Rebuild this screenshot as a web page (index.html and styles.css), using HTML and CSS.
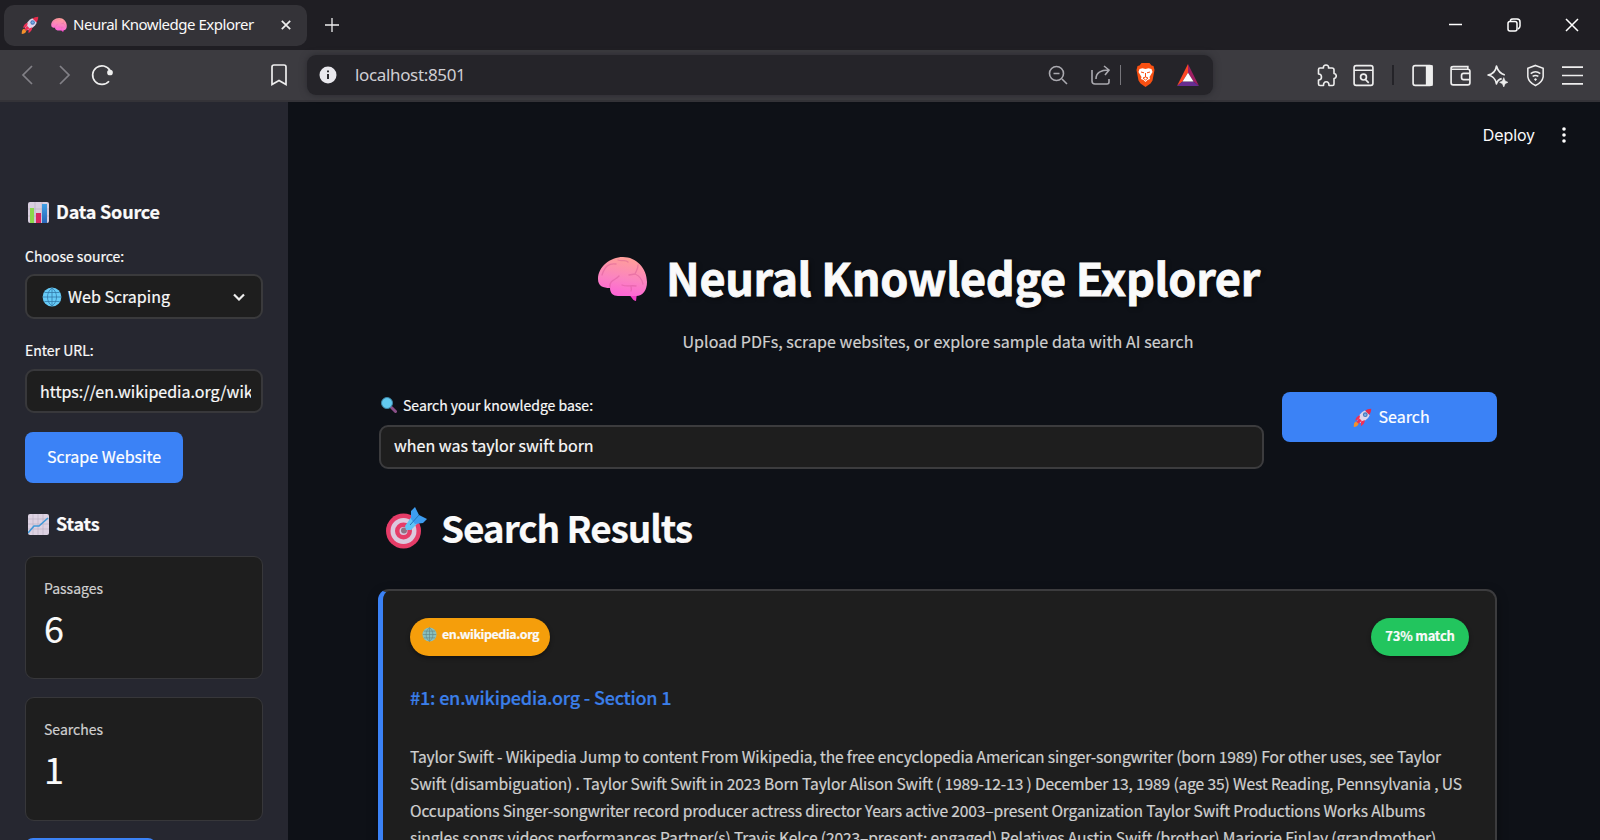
FILE: index.html
```html
<!DOCTYPE html>
<html lang="en"><head><meta charset="utf-8"><title>Neural Knowledge Explorer</title><link rel="stylesheet" href="styles.css"></head>
<body>
<svg class="defs" width="0" height="0" aria-hidden="true">
<defs>
<linearGradient id="pink" x1=".3" y1="0" x2=".1" y2="1"><stop offset="0" stop-color="#ff9d9b"/><stop offset=".5" stop-color="#fb84c0"/><stop offset="1" stop-color="#ff5fda"/></linearGradient>
<linearGradient id="blue" x1="0" y1="0" x2="0" y2="1"><stop offset="0" stop-color="#3fa0e6"/><stop offset="1" stop-color="#2a66b8"/></linearGradient>
<symbol id="brain" viewBox="0 0 49 44"><path fill="#f03fc4" d="M31 36h8l-1 8c-3 0-4-4-7-6Z"/><path fill="url(#pink)" d="M25 0C38 0 49 11 49 25c0 8-4 14-11 14H20c-5 0-8-3-8-8C5 31 0 29 0 22 0 10 12 0 25 0Z"/><path fill="none" stroke="#cf4f90" stroke-opacity=".4" stroke-width="1.300" stroke-linecap="round" d="M4 18C7 9 11 6 18 7M12 30c-1-7 6-7 9-11M20 3c4 2 7-1 10 2M40 8c0 5-2 6-3 9M37 17c5 2 7 5 8 10M37 17l-6 1M24 28c5 2 8 0 14 1M33 29c0 2 1 3 0 5"/></symbol>
<symbol id="rocket" viewBox="0 0 24 24"><path fill="#e52a4b" d="M23 1c-3 0-6 1-8 3l5 5c2-2 3-5 3-8Z"/><path fill="#dfd5ea" d="M15 3c-5 2-8 7-10 12l4 4c5-2 10-5 12-10Z"/><path fill="#ee3157" d="M9 9c-4 1-6 4-6 7l5-2ZM15 15c0 4-2 6-5 8l0-6ZM8 13l3 3-4 4-3-2Z"/><path fill="#f4912b" d="M4 17l3 3c-1 3-3 4-6 4 0-3 0-6 3-7Z"/><circle cx="15.5" cy="8.5" r="3" fill="#4376b8"/><circle cx="15.5" cy="8.5" r="1.6" fill="#79b0e8"/></symbol>
<symbol id="bars" viewBox="0 0 21 21"><rect width="21" height="21" rx="2" fill="#d9cfdf"/><path stroke="#b7adbf" stroke-width=".6" d="M0 7h21M0 14h21M7 0v21M14 0v21"/><path fill="#8bd84c" d="M2 6h4v15H2z"/><path fill="#d92863" d="M8 11h5v10H8z"/><path fill="url(#blue)" d="M14 2h5v19h-5z"/></symbol>
<symbol id="chart" viewBox="0 0 21 21"><rect width="21" height="21" rx="2" fill="#ddd2e2"/><path stroke="#bbaec4" stroke-width=".6" d="M0 5h21M0 10h21M0 15h21M5 0v21M10 0v21M15 0v21"/><path fill="none" stroke="#3f98d8" stroke-width="1.6" d="M0 19 6 12h5L20 4"/></symbol>
<symbol id="globe" viewBox="0 0 20 20"><circle cx="10" cy="10" r="9.4" fill="#66cbf7"/><path fill="none" stroke="#327aa9" stroke-width=".8" d="M10 1v18M1 10h18M2.400 5.500h15.200M2.400 14.500h15.200M10 1C4 5 4 15 10 19M10 1c6 4 6 14 0 18"/></symbol>
<symbol id="lens" viewBox="0 0 16 16"><path stroke="#8a4f88" stroke-width="3" stroke-linecap="round" d="m10.500 10.500 4 4"/><circle cx="6" cy="6" r="5.500" fill="#62caf0" stroke="#3d86a6"/></symbol>
<symbol id="target" viewBox="0 0 41 42"><circle cx="17.500" cy="24" r="17.500" fill="#e63c68"/><circle cx="17.500" cy="24" r="13" fill="#dcc9de"/><circle cx="17.500" cy="24" r="8.500" fill="#e63c68"/><circle cx="17.500" cy="24" r="4" fill="#d8c8de"/><circle cx="18" cy="23.500" r="3" fill="#8d7485"/><path fill="#5fc4f5" d="m19 19 7-10 7 6-8 8-5 0Z"/><path fill="#3d9df0" d="m25 12 0-8 4-4 4 8 8 4-4 4-8 1Z"/><path stroke="#2375b9" stroke-width="1" d="m24 18 9-10"/></symbol>
</defs></svg>
<header class="tabs">
  <div class="tab"><svg class="e18"><use href="#rocket"/></svg><svg class="tab-brain"><use href="#brain"/></svg><span>Neural Knowledge Explorer</span><svg class="close" viewBox="0 0 10 10"><path d="m.8.8 8.400 8.400M9.200.8.8 9.200"/></svg></div>
  <svg class="plus" viewBox="0 0 14 14"><path d="M7 0v14M0 7h14"/></svg>
  <div class="win"><svg viewBox="0 0 14 14"><path d="M0 6.500h13"/></svg><svg viewBox="0 0 14 14"><rect x="1" y="3.500" width="9" height="9.500" rx="2"/><path d="M3.500 3.500V2Q4 1 6 1h4q3 0 3 3v4q0 2-2 3"/></svg><svg viewBox="0 0 14 14"><path d="m1 1 12 12M13 1 1 13"/></svg></div>
</header>
<nav class="toolbar">
  <div class="history"><svg class="dim" viewBox="0 0 12 20"><path d="M11 1 2 10l9 9"/></svg><svg class="dim" viewBox="0 0 12 20"><path d="m1 1 9 9-9 9"/></svg><svg class="reload" viewBox="0 0 22 22"><path d="M18 17.200A9.300 9.300 0 1 1 19 6.500"/><circle class="solid" cx="19" cy="8.500" r="2"/></svg><svg class="bookmark" viewBox="0 0 16 22"><path d="M1 3q0-2 2-2h10q2 0 2 2v17.500l-7-4-7 4Z"/></svg></div>
  <div class="address"><svg class="info" viewBox="0 0 18 18"><circle cx="9" cy="9" r="8.500"/><path d="M9 8v5M9 4.500v1.800"/></svg><span>localhost:8501</span>
    <div class="address-icons"><svg class="soft" viewBox="0 0 20 20"><circle cx="8.500" cy="8.500" r="7"/><path d="M5.500 8.500h6M14 14l5 5"/></svg><svg class="soft" viewBox="0 0 20 20"><path d="M1 5v11q0 3 3 3h12q2 0 2-2v-3M5 14c0-6 4-9 13-9M13 1l5 4-4 5"/></svg><i></i><svg class="lion" viewBox="0 0 18 24"><path fill="#f85012" d="M5 0h8l2 2.500 2 .5 1 4-2 10.500-2 3-5 3.500-5-3.500-2-3L0 7l1-4 2-.5Z"/><path fill="#fff" d="m3 6 3-.8 3 .8 3-.8 3 .8 1 3-3 5 .5 2-2.500 1-2 2-2-2-2.500-1L5 14 2 9Z"/><path d="m4.500 9 3 .8M13.500 9l-3 .8M9 10v4l-2.500 1L9 17l2.500-2L9 14" fill="none" stroke="#f85012"/></svg><svg class="bat" viewBox="0 0 20 20"><path fill="#ff4724" d="M10 0 0 20l5-4 5-8Z"/><path fill="#9e1f63" d="m10 0 10 20-5-4-5-8Z"/><path fill="#662d91" d="M0 20h20l-5-4H5Z"/><path fill="#fff" d="m10 8-5 8h10Z"/></svg></div>
  </div>
  <div class="extensions">
    <svg viewBox="0 0 21 23"><path stroke-linejoin="round" d="M2.500 5.500q0-1.500 1.500-1.500h3.500c-1-4 6-4 5 0H16q2 0 2 2v3.500c3 .5 3 4.500 0 5V20q0 1.500-1.500 1.500H13c0-5-5.500-5-5.500 0H4q-1.500 0-1.500-1.500v-4c4 0 4-6 0-6Z"/></svg>
    <svg viewBox="0 0 20 22"><rect x="1" y="1.500" width="18" height="19" rx="2"/><path d="M1 6h18M12 15l3 3"/><circle cx="10" cy="12.500" r="2.800"/></svg><i></i>
    <svg viewBox="0 0 20 22"><rect x="1" y="1.500" width="18" height="19" rx="2"/><path class="solid" d="M14 2h5v18h-5Z"/></svg>
    <svg viewBox="0 0 20 22"><path d="M17 5V2.500H3Q1 2.500 1 4v14q0 2 2 2h14q2 0 2-2V7q0-2-2-2H1M19 9h-6q-2 0-2 2v2q0 2 2 2h6"/></svg>
    <svg viewBox="0 0 20 22"><path stroke-linejoin="round" d="M14 14q-4 1-5 5-1-7-8-8.500Q8 9 9 2q2 7 8 8.500"/><path class="solid" stroke-width=".5" d="m16 13 1.300 3.200L20 17.500l-2.700 1.300L16 22l-1.300-3.200-2.700-1.300 2.700-1.300Z"/></svg>
    <svg viewBox="0 0 20 24"><path d="m10 1.500 8 3v9q-1 6-8 9-7-3-8-9v-9ZM5 10q5-4 10 0M7 13q3-2 6 0M9 15.500l1 1 1-1"/></svg>
    <svg viewBox="0 0 20 20"><path d="M0 2h20M0 10h20M0 18h20"/></svg>
  </div>
</nav>
<div class="app">
<aside class="sidebar">
  <h3><svg><use href="#bars"/></svg><span>Data Source</span></h3>
  <label class="l-source"><span>Choose source:</span></label>
  <div class="select"><svg class="globe"><use href="#globe"/></svg><span>Web Scraping</span><svg class="chev" viewBox="0 0 12 8"><path d="m1 1.500 5 5 5-5"/></svg></div>
  <label class="l-url"><span>Enter URL:</span></label>
  <div class="url"><div><span>https://en.wikipedia.org/wiki</span></div></div>
  <button class="scrape"><span>Scrape Website</span></button>
  <h3 class="stats"><svg><use href="#chart"/></svg><span>Stats</span></h3>
  <div class="metric"><small>Passages</small><b>6</b></div>
  <div class="metric second"><small>Searches</small><b>1</b></div>
  <button class="more"></button>
</aside>
<main>
  <div class="deploy"><span>Deploy</span><svg viewBox="0 0 4 16"><circle cx="2" cy="2" r="1.800"/><circle cx="2" cy="8" r="1.800"/><circle cx="2" cy="14" r="1.800"/></svg></div>
  <h1><svg><use href="#brain"/></svg><span>Neural Knowledge Explorer</span></h1>
  <p class="sub"><span>Upload PDFs, scrape websites, or explore sample data with AI search</span></p>
  <section class="search"><div><label><svg><use href="#lens"/></svg><span>Search your knowledge base:</span></label><div class="query"><span>when was taylor swift born</span></div></div><button><svg><use href="#rocket"/></svg><span>Search</span></button></section>
  <h2><svg><use href="#target"/></svg><span>Search Results</span></h2>
  <article><div class="badges"><div class="source"><svg><use href="#globe"/></svg><span>en.wikipedia.org</span></div><div class="match"><span>73% match</span></div></div>
  <h4><span>#1: en.wikipedia.org - Section 1</span></h4>
  <div class="passage"><span>Taylor Swift - Wikipedia Jump to content From Wikipedia, the free encyclopedia American singer-songwriter (born 1989) For other uses, see Taylor</span><span>Swift (disambiguation) . Taylor Swift Swift in 2023 Born Taylor Alison Swift ( 1989-12-13 ) December 13, 1989 (age 35) West Reading, Pennsylvania , US</span><span>Occupations Singer-songwriter record producer actress director Years active 2003–present Organization Taylor Swift Productions Works Albums</span><span>singles songs videos performances Partner(s) Travis Kelce (2023–present; engaged) Relatives Austin Swift (brother) Marjorie Finlay (grandmother)</span></div></article>
</main></div>
</body></html>
```
FILE: styles.css
```css
*{box-sizing:border-box}
body{margin:0;width:1600px;height:840px;overflow:hidden;background:#0e1117;color:#fafafa;font-family:"Noto Sans CJK SC","Noto Sans",sans-serif;font-size:16px;display:flex;flex-direction:column}
.defs{position:absolute}
svg{display:block;flex:none}
span,small,b{white-space:nowrap}
button{border:0;font:inherit;color:#fff;background:#3b82f6}
h1,h2,h3,h4,p{margin:0}
.tabs{height:50px;flex:none;background:#1f1e23;display:flex;align-items:center;padding-left:4px}
.tab{width:303px;height:41px;background:#343338;border-radius:10px;display:flex;align-items:center;padding:0 16px 0 17px;font:15px "Noto Sans",sans-serif}
.e18{width:18px;height:18px}
.tab-brain{width:16px;height:14px;margin:0 6px 0 12px}
.tab span{letter-spacing:-.47px;margin-top:-2px}
.close{width:10px;height:10px;margin-left:auto}
.close,.plus,.win svg,.history svg,.address-icons .soft,.extensions svg,.chev{fill:none;stroke:#eee;stroke-width:1.700}
.plus{width:14px;height:14px;margin-left:18px;stroke-width:1.300}
.win{margin-left:auto;display:flex;gap:44px;padding-right:21px}
.win svg{width:14px;height:14px;stroke:#fff;stroke-width:1.500}
.toolbar{height:52px;flex:none;background:#3c3b40;border-bottom:2px solid #343338;display:flex;align-items:center}
.history{width:307px;display:flex;align-items:center;padding-left:21px}
.history svg.dim{width:12px;height:20px;stroke:#828187;margin-right:26px}
.history .reload{width:22px;height:22px;margin-left:-6px}
.history svg .solid,.extensions svg .solid{fill:#eee}
.history .bookmark{width:16px;height:22px;margin-left:158px}
.address{width:906px;height:40px;background:#252429;border-radius:9px;box-shadow:0 0 7px #2b2a2f;display:flex;align-items:center;padding:0 14px 0 12px;font:17px "Noto Sans",sans-serif;color:#cfced3}
.address span{letter-spacing:-.35px;margin-top:-1px}
.info{width:18px;height:18px;fill:#e9e8ed;margin-right:18px}
.info path{stroke:#29282d;stroke-width:2}
.address-icons{margin-left:auto;display:flex;align-items:center}
.address-icons .soft{width:20px;height:20px;stroke:#aaa9af;stroke-width:1.600;margin-right:23px}
.address-icons .soft+.soft{margin-right:9px}
.address-icons i{width:1px;height:20px;background:#77767b;margin-right:15px}
.lion{width:19px;height:24px;margin-right:22px}
.bat{width:22px;height:22px}
.extensions{margin-left:auto;padding-right:17px;display:flex;align-items:center;gap:16.500px}
.extensions svg{width:21px;height:23px;stroke-width:1.600}
.extensions i{width:2px;height:20px;background:#242328;margin:0 2px 0 1px}
.app{display:flex;flex:1;min-height:0;overflow:hidden;-webkit-text-stroke:.2px}
.sidebar{width:288px;background:#262730;padding:96px 25px 0;flex:none;display:flex;flex-direction:column;align-items:flex-start}
.sidebar>*,main>*{flex:none}
h3{height:28px;display:flex;align-items:center;gap:7px;font-size:18px;font-weight:700;letter-spacing:-.2px;padding-left:3px}
h3 svg{width:21px;height:21px}
h3 span,.select span,.l-url span,.sub span,.query span,.search button span,.source span,.match span{margin-top:-2px}
label{font-size:14px;font-weight:400;display:flex;align-items:center;height:20px}
.l-source{margin-top:20px}
.select{width:238px;height:45px;margin-top:8px;border:2px solid #3a3a3c;border-radius:9px;background:#1e1e1e;display:flex;align-items:center;padding:0 16px 0 15px}
.globe{width:20px;height:20px;margin-right:6px}
.chev{width:12px;height:8px;margin-left:auto;stroke-width:2.200}
.l-url{margin-top:22px}
.url{width:238px;height:44px;margin-top:8px;border:2px solid #38383b;border-radius:9px;background:#1e1e1e;display:flex;align-items:center;padding:0 10px 0 13px}
.url div{overflow:hidden;width:211px}
.scrape{width:158px;height:51px;border-radius:8px;margin-top:19px;padding:0 0 4px}
.stats{margin-top:27px}
.metric{width:238px;height:123px;border:1px solid #37373a;border-radius:9px;background:#1e1e1e;padding:20px 18px;margin-top:18px;display:flex;flex-direction:column}
.metric.second{height:124px;margin-top:18px}
.metric small{font-size:14px;line-height:22px;color:#d0d0d0}
.metric b{font-size:36px;line-height:54px;font-weight:400;margin-top:1px}
.more{width:131px;height:50px;border-radius:8px;margin-top:17px}
main{flex:1;padding:0 103px 0 91px;display:flex;flex-direction:column;min-width:0}
.deploy{height:66px;display:flex;align-items:center;justify-content:flex-end;gap:27px;font:16px Inter,sans-serif;letter-spacing:-.1px;margin-right:-69px;-webkit-text-stroke:0}
.deploy svg{width:4px;height:16px;fill:#fff}
h1{height:72px;margin-top:75px;display:flex;align-items:center;justify-content:center;gap:19px;font-size:45px;letter-spacing:-.36px;padding-right:18px;text-shadow:2px 2px 4px #0008;-webkit-text-stroke:.8px}
h1 span{margin-top:-6px}
h1 svg{width:49px;height:44px}
.sub{height:28px;margin-top:13px;display:flex;align-items:center;justify-content:center;color:#d0d0d0;font-size:16px;letter-spacing:.06px}
.search{height:78px;margin-top:36px;display:flex;gap:18px;align-items:flex-start}
.search>div{width:886px}
.search label{height:26px;padding-left:2px;gap:6px}
.search label svg{width:16px;height:16px}
.query{height:44px;border:2px solid #3c3c3e;border-radius:9px;background:#1e1e1e;margin-top:7px;padding:0 13px 2px;display:flex;align-items:center}
.search button{width:215px;height:50px;border-radius:8px;display:flex;align-items:center;justify-content:center;gap:7px;padding:0 0 0 3px}
.search button svg{width:19px;height:19px}
h2{height:64px;margin-top:27px;display:flex;align-items:center;font-size:37px;letter-spacing:-1.100px;padding-left:7px;gap:14px}
h2 span{margin-top:-5px}
h2 svg{width:41px;height:42px;margin-top:-2px}
article{height:300px;margin:28px 0 0 -1px;border:2px solid #3c3c3e;border-left:5px solid #3b82f6;border-radius:11px;background:#1e1e1e;padding:27px 26px 27px 27px;box-shadow:0 4px 12px #0005}
.badges{display:flex;justify-content:space-between;font-size:13px;font-weight:700}
.source{width:140px;height:38px;border-radius:19px;background:#f59e0b;padding:0 10px 6px 12px;display:flex;align-items:center;gap:5px;font-size:12.500px;letter-spacing:-.42px;box-shadow:0 2px 4px #0006}
.source svg{width:15px;height:15px;opacity:.75}
.match{width:98px;height:38px;border-radius:19px;background:#22c55e;display:flex;align-items:center;justify-content:center;letter-spacing:-.2px;padding-bottom:1px;box-shadow:0 2px 4px #0006}
h4{height:28px;margin-top:27px;font-size:18px;font-weight:500;letter-spacing:-.2px;color:#3b7fe9;display:flex;align-items:center}
.passage{display:flex;flex-direction:column;margin-top:32px;line-height:27px;font-size:15.600px;letter-spacing:-.145px;color:#d0d0d0}
```
